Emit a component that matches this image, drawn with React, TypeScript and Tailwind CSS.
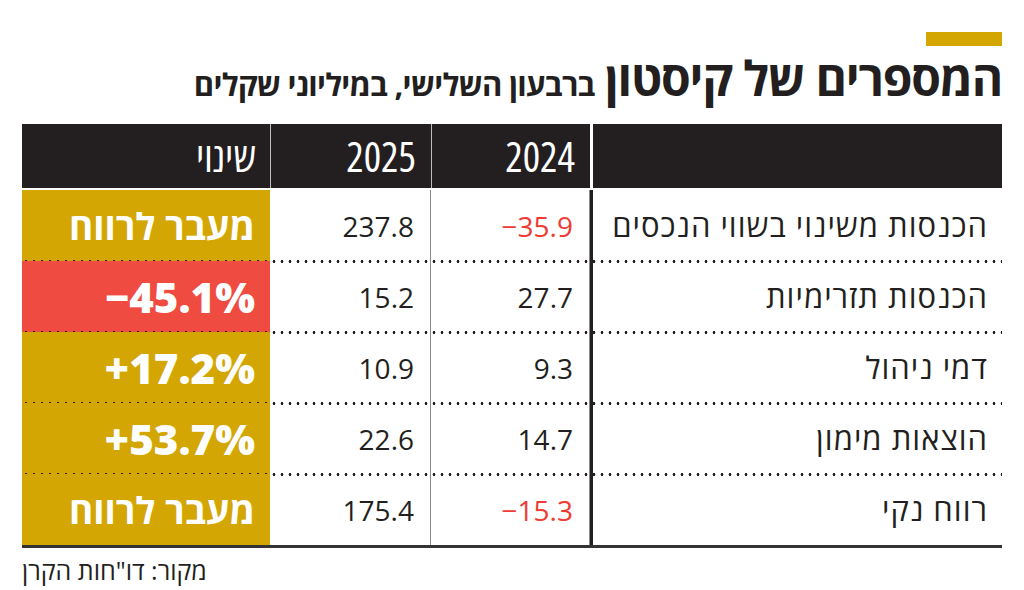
const rows = [
  { label: 'הכנסות משינוי בשווי הנכסים', y2024: '−35.9', neg2024: true, y2025: '237.8', change: 'מעבר לרווח', tone: 'yellow', isText: true },
  { label: 'הכנסות תזרימיות', y2024: '27.7', neg2024: false, y2025: '15.2', change: '−45.1%', tone: 'red', isText: false },
  { label: 'דמי ניהול', y2024: '9.3', neg2024: false, y2025: '10.9', change: '+17.2%', tone: 'yellow', isText: false },
  { label: 'הוצאות מימון', y2024: '14.7', neg2024: false, y2025: '22.6', change: '+53.7%', tone: 'yellow', isText: false },
  { label: 'רווח נקי', y2024: '−15.3', neg2024: true, y2025: '175.4', change: 'מעבר לרווח', tone: 'yellow', isText: true },
];

const Dots = () => (
  <div className="absolute left-0 right-0 -bottom-[1.5px] h-[3px] bg-[radial-gradient(circle,#231f20_1.25px,transparent_1.6px)] bg-[length:8px_3px]" />
);

export default function App() {
  return (
    <div
      dir="rtl"
      className="w-[1024px] h-[590px] bg-white px-[22px] pt-[32px] text-[#231f20] overflow-hidden"
      style={{ fontFamily: "'Open Sans', 'DejaVu Sans', sans-serif" }}
    >
      <div className="w-[76px] h-[14px] bg-[#d4a604]" />

      <div className="flex items-baseline gap-[10px] mt-[8px] h-[56px]">
        <h1 className="text-[48px] leading-none font-bold tracking-tight">המספרים של קיסטון</h1>
        <h2 className="text-[31px] leading-none font-bold tracking-tight">ברבעון השלישי, במיליוני שקלים</h2>
      </div>

      <div className="mt-[14px]">
        {/* header */}
        <div className="grid grid-cols-[412px_159px_161px_248px] h-[64px] bg-[#231f20] text-white text-[41px] font-stretch-condensed leading-none">
          <div className="border-l-[3px] border-white" />
          <div dir="ltr" className="flex items-center justify-end pr-[15px] border-l border-[#bdbdbd]">2024</div>
          <div dir="ltr" className="flex items-center justify-end pr-[15px] border-l border-[#bdbdbd]">2025</div>
          <div className="flex items-center pr-[14px]">שינוי</div>
        </div>

        {/* body */}
        <div className="mt-[2px] border-b-[3px] border-[#333]">
          {rows.map((r, i) => (
            <div key={i} className="relative grid grid-cols-[412px_159px_161px_248px] h-[71px]">
              <div className="flex items-center pr-[14px] text-[31px] tracking-[1px] border-l-[3px] border-[#231f20]">{r.label}</div>
              <div
                dir="ltr"
                className={`flex items-center justify-end pr-[16px] text-[28px] border-r border-[#8a8a8a] ${r.neg2024 ? 'text-[#ee3b33]' : ''}`}
              >
                {r.y2024}
              </div>
              <div dir="ltr" className="flex items-center justify-end pr-[16px] text-[28px] border-r border-[#8a8a8a]">
                {r.y2025}
              </div>
              <div
                className={`flex items-center pr-[15px] text-white leading-none ${
                  r.tone === 'red' ? 'bg-[#f04b40]' : 'bg-[#d4a604]'
                } ${r.isText ? 'text-[37px] font-bold' : 'text-[42px] font-extrabold'}`}
              >
                <span dir={r.isText ? 'rtl' : 'ltr'}>{r.change}</span>
              </div>
              {i < rows.length - 1 && <Dots />}
            </div>
          ))}
        </div>

        <div className="mt-[6px] text-left text-[25px] leading-[32px]">מקור: דו"חות הקרן</div>
      </div>
    </div>
  );
}
